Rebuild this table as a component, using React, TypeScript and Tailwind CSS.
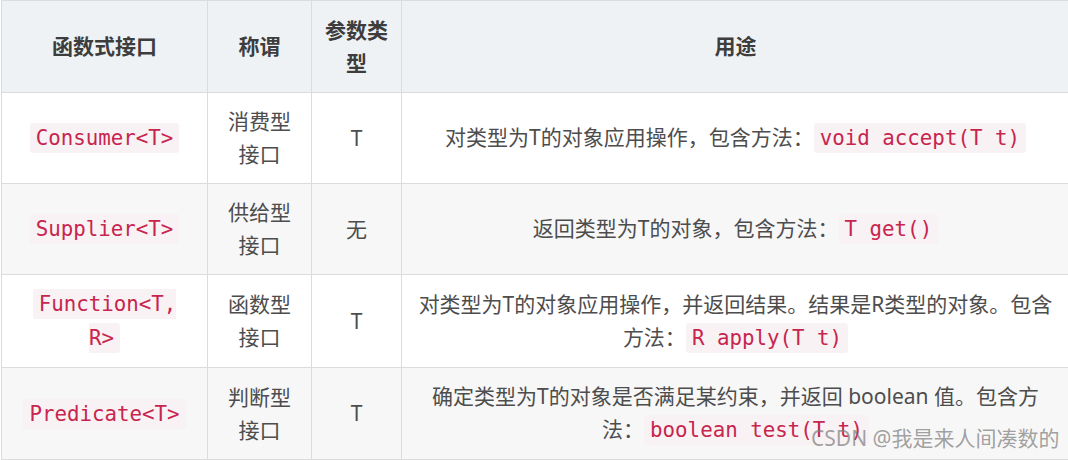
const rows = [
  {
    name: "Consumer<T>",
    title: "消费型接口",
    param: "T",
    text: "对类型为T的对象应用操作，包含方法：",
    code: "void accept(T t)",
    height: "h-[91px]",
  },
  {
    name: "Supplier<T>",
    title: "供给型接口",
    param: "无",
    text: "返回类型为T的对象，包含方法：",
    code: "T get()",
    height: "h-[91px]",
  },
  {
    name: "Function<T, R>",
    title: "函数型接口",
    param: "T",
    text: "对类型为T的对象应用操作，并返回结果。结果是R类型的对象。包含方法：",
    code: "R apply(T t)",
    height: "h-[93px]",
  },
  {
    name: "Predicate<T>",
    title: "判断型接口",
    param: "T",
    text: "确定类型为T的对象是否满足某约束，并返回 boolean 值。包含方法：",
    code: "boolean test(T t)",
    height: "h-[92px]",
  },
];

function Code({ children }: { children: string }) {
  return (
    <code className="rounded-[3px] bg-[#f9f2f4] px-[6px] py-[3px] font-['DejaVu_Sans_Mono',monospace] text-[20.8px] text-[#c7254e]">
      {children}
    </code>
  );
}

export default function App() {
  return (
    <div className="relative h-[460px] w-[1068px] overflow-hidden bg-white font-['Noto_Sans','Noto_Sans_CJK_SC',sans-serif] text-[21px] leading-[33px] text-[#4d4d4d]">
      <table className="ml-px w-[1068px] table-fixed border-collapse text-center">
        <colgroup>
          <col className="w-[206px]" />
          <col className="w-[104px]" />
          <col className="w-[90px]" />
          <col className="w-[668px]" />
        </colgroup>
        <thead>
          <tr className="h-[92px] bg-[#eff2f5] font-bold text-[#3d3d3d]">
            <th className="border border-[#dcdcdc] px-3 align-middle">函数式接口</th>
            <th className="border border-[#dcdcdc] px-3 align-middle">称谓</th>
            <th className="border border-[#dcdcdc] px-3 align-middle">参数类型</th>
            <th className="border border-[#dcdcdc] px-3 align-middle">用途</th>
          </tr>
        </thead>
        <tbody>
          {rows.map((r, i) => (
            <tr key={r.name} className={`${r.height} ${i % 2 === 1 ? "bg-[#f7f7f7]" : "bg-white"}`}>
              <td className="border border-[#dcdcdc] px-3 align-middle">
                <Code>{r.name}</Code>
              </td>
              <td className="border border-[#dcdcdc] px-3 align-middle">{r.title}</td>
              <td className="border border-[#dcdcdc] px-3 align-middle">{r.param}</td>
              <td className="border border-[#dcdcdc] px-3 align-middle">
                {r.text}
                <Code>{r.code}</Code>
              </td>
            </tr>
          ))}
        </tbody>
      </table>
      {/* watermark over the last row */}
      <div className="absolute left-[811px] top-[427px] whitespace-nowrap font-['Noto_Sans','Noto_Sans_CJK_SC',sans-serif] text-[21px] leading-[22px] text-[#7a7a7a]/70">
        CSDN @我是来人间凑数的
      </div>
    </div>
  );
}
